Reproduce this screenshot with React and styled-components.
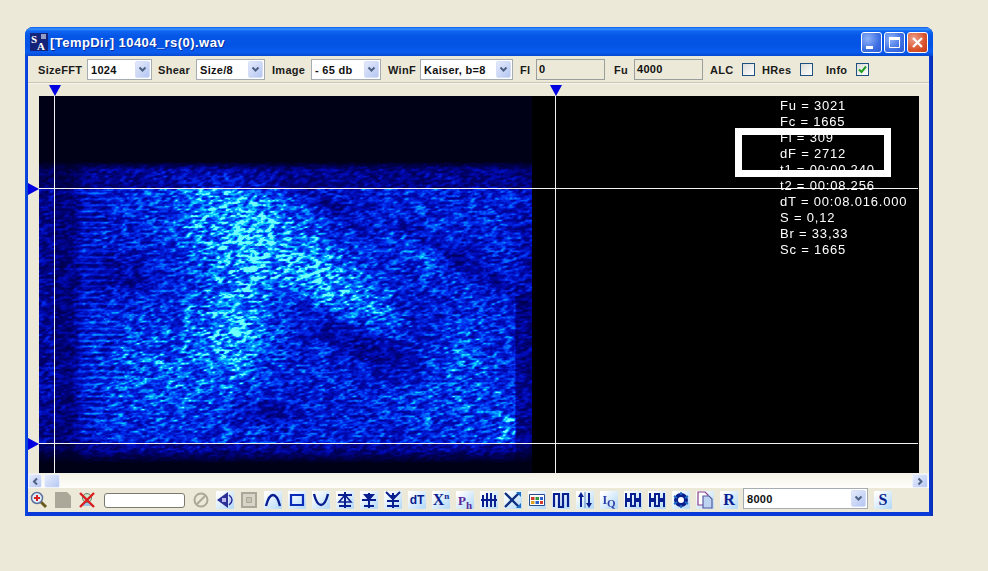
import React, { useEffect, useRef } from "react";
import styled, { createGlobalStyle } from "styled-components";

const Global = createGlobalStyle`
  html, body { margin: 0; padding: 0; background: #ECE9D8; }
  body { width: 988px; height: 571px; overflow: hidden; font-family: "Liberation Sans", Arial, sans-serif; }
`;

const Page = styled.div`
  width: 988px;
  height: 571px;
  padding: 27px 0 0 25px;
  box-sizing: border-box;
`;

const Window = styled.div`
  width: 908px;
  height: 489px;
  display: flex;
  flex-direction: column;
  border-radius: 8px 8px 0 0;
  box-sizing: border-box;
  padding: 0 4px 4px 3px;
  background: linear-gradient(90deg, #0a4ee0 0, #0a3ad8 3px, #0a3ad8 calc(100% - 4px), #0a2cb0 100%);
`;

const TitleBar = styled.div`
  height: 29px;
  flex: none;
  margin: 0 -4px 0 -3px;
  padding: 0 5px 0 5px;
  display: flex;
  align-items: center;
  gap: 2px;
  border-radius: 8px 8px 0 0;
  background: linear-gradient(180deg, #0a5ae6 0, #3a93ff 2px, #0f66f0 4px, #0556e6 9px, #0353e4 18px, #0a5cf0 25px, #0649d0 29px);
`;

const AppGlyph = styled.span`
  width: 18px;
  height: 18px;
  flex: none;
  display: block;
`;

const Title = styled.span`
  color: #fff;
  font: bold 13px "Liberation Sans", Arial, sans-serif;
  letter-spacing: 0.45px;
  flex: 1;
  margin-top: 1px;
  text-shadow: 1px 1px 0 #0a2fa0;
`;

const CaptionButtons = styled.div`
  display: flex;
  gap: 2px;
  margin-top: 1px;
`;

const CaptionButton = styled.div`
  width: 21px;
  height: 21px;
  box-sizing: border-box;
  border: 1px solid #fff;
  border-radius: 3px;
  background: ${(p) =>
    p.$close
      ? "radial-gradient(circle at 30% 30%, #eda08a, #d9532c 60%, #c23a17)"
      : "radial-gradient(circle at 30% 30%, #8fb2f6, #3e70e4 60%, #2a5ad4)"};
  display: flex;
  align-items: center;
  justify-content: center;
`;

const Client = styled.div`
  flex: 1;
  min-height: 0;
  background: #ECE9D8;
  display: flex;
  flex-direction: column;
`;

const Toolbar = styled.div`
  height: 27px;
  flex: none;
  display: flex;
  align-items: center;
  box-sizing: border-box;
  padding-top: 1px;
  border-bottom: 1px solid #c9c6b6;
  box-shadow: 0 1px 0 #f8f6ec;
`;

const Label = styled.span`
  font: bold 11px "Liberation Sans", Arial, sans-serif;
  color: #1a1a1a;
  letter-spacing: 0.3px;
  width: ${(p) => p.$w}px;
  margin-left: ${(p) => p.$ml || 0}px;
  flex: none;
  white-space: nowrap;
`;

const Combo = styled.div`
  flex: none;
  width: ${(p) => p.$w}px;
  height: 21px;
  margin-left: ${(p) => p.$ml || 0}px;
  box-sizing: border-box;
  border: 1px solid #a5acb2;
  background: #fff;
  display: flex;
  align-items: center;
  justify-content: space-between;
  padding: 0 1px 0 3px;
  font: bold 11px "Liberation Sans", Arial, sans-serif;
  letter-spacing: 0.3px;
  color: #111;
`;

const ComboArrow = styled.span`
  width: 15px;
  height: 17px;
  flex: none;
  border-radius: 2px;
  background: linear-gradient(135deg, #e4eafb, #b5c6f2);
  border: 1px solid #d6dff7;
  box-sizing: border-box;
  display: flex;
  align-items: center;
  justify-content: center;
`;

const ReadOnly = styled.div`
  flex: none;
  width: 69px;
  height: 21px;
  box-sizing: border-box;
  border: 1px solid #9a9f9e;
  background: #ECE9D8;
  padding: 0 0 2px 2px;
  display: flex;
  align-items: center;
  font: bold 11px "Liberation Sans", Arial, sans-serif;
  letter-spacing: 0.3px;
  color: #111;
`;

const Check = styled.span`
  flex: none;
  width: 13px;
  height: 13px;
  box-sizing: border-box;
  border: 1px solid #1c5180;
  background: linear-gradient(135deg, #dcdcd7, #ffffff);
  display: flex;
  align-items: center;
  justify-content: center;
`;

const Ruler = styled.div`
  height: 12px;
  flex: none;
  margin-top: 1px;
`;

const Scope = styled.div`
  position: relative;
  flex: none;
  height: 377px;
  margin: 0 11px;
  background: #000;
`;

const Spectro = styled.canvas`
  display: block;
  width: 880px;
  height: 377px;
`;

const Marker = styled.svg`
  position: absolute;
  overflow: visible;
  left: ${(p) => p.$x}px;
  top: ${(p) => p.$y}px;
`;

const VLine = styled.div`
  position: absolute;
  top: 0;
  bottom: 0;
  left: ${(p) => p.$x}px;
  width: 1px;
  background: #f2f2f2;
`;

const HLine = styled.div`
  position: absolute;
  left: 0;
  right: 0;
  top: ${(p) => p.$y}px;
  height: 1px;
  background: #f2f2f2;
`;

const Selection = styled.div`
  position: absolute;
  left: 696px;
  top: 32px;
  width: 156px;
  height: 49px;
  box-sizing: border-box;
  border: 7px solid #fff;
`;

const Info = styled.div`
  position: absolute;
  left: 741px;
  top: 2px;
  color: #fff;
  font: 13px/16px "Liberation Sans", Arial, sans-serif;
  letter-spacing: 0.8px;
  white-space: nowrap;
`;

const Scroll = styled.div`
  height: 15px;
  flex: none;
  display: flex;
  align-items: stretch;
  background: linear-gradient(180deg, #f3f1e6, #fefefb);
  padding: 1px 1px 0 0;
  box-sizing: border-box;
`;

const ScrollButton = styled.div`
  width: ${(p) => p.$w}px;
  flex: none;
  margin-left: ${(p) => p.$ml || 0}px;
  box-sizing: border-box;
  border: 1px solid #eef2fd;
  border-radius: 2px;
  background: linear-gradient(135deg, #e6ecfc, #b7c8f3);
  display: flex;
  align-items: center;
  justify-content: center;
`;

const ScrollSpace = styled.div`
  flex: 1;
`;

const BottomBar = styled.div`
  flex: 1;
  min-height: 0;
  display: flex;
  align-items: center;
`;

const Tool = styled.div`
  flex: none;
  width: 24px;
  height: 20px;
  margin-left: ${(p) => p.$ml || 0}px;
  position: relative;
  display: flex;
  align-items: center;
  justify-content: center;
  &::before {
    content: "";
    position: absolute;
    left: 3px;
    right: 3px;
    top: 1px;
    bottom: 1px;
    display: ${(p) => (p.$plain ? "none" : "block")};
    background: linear-gradient(135deg, #ffffff 10%, #b9dcf8 90%);
  }
  & > * { position: relative; }
`;

const ToolText = styled.span`
  color: ${(p) => p.$color || "#0a1f8f"};
  font: bold ${(p) => p.$size || 15}px "Liberation Serif", "Times New Roman", serif;
  line-height: 1;
  white-space: nowrap;
`;

const ToolSans = styled(ToolText)`
  font-family: "Liberation Sans", Arial, sans-serif;
`;

const Sup = styled.sup`
  font-size: 9px;
  line-height: 0;
`;

const Sub = styled.sub`
  font-size: 11px;
  line-height: 0;
`;

const TextBox = styled.div`
  flex: none;
  width: 81px;
  height: 15px;
  margin: 0 4px 0 5px;
  box-sizing: border-box;
  border: 1px solid #7a7a70;
  border-radius: 3px;
  background: #fff;
`;

const RateCombo = styled(Combo)`
  width: 125px;
  margin-left: 2px;
  margin-top: -3px;
`;

const Chevron = () => (
  <svg width="9" height="7" viewBox="0 0 9 7">
    <path d="M1.5 1.5 4.5 4.5 7.5 1.5" fill="none" stroke="#4d6185" strokeWidth="2" />
  </svg>
);

const SideChevron = ({ right }) => (
  <svg width="7" height="9" viewBox="0 0 7 9">
    <path d={right ? "M1.5 1.5 4.5 4.5 1.5 7.5" : "M5 1.5 2 4.5 5 7.5"} fill="none" stroke="#4d6185" strokeWidth="2" />
  </svg>
);

const Ico = ({ children, w = 18, h = 18 }) => (
  <svg width={w} height={h} viewBox={`0 0 ${w} ${h}`}>
    {children}
  </svg>
);

const INK = "#0a1f8f";

const greekKey = (
  <Ico>
    <path d="M2 2v6h5V3h4v5h5V2M2 16v-6h5v5h4v-5h5v6" stroke={INK} strokeWidth="2" fill="none" />
  </Ico>
);

const icons = {
  zoom: (
    <Ico>
      <path d="M10.5 10.5 16 16" stroke="#6b5a20" strokeWidth="3" />
      <circle cx="7" cy="7" r="5.5" fill="#dff0ff" stroke="#5d6f9a" strokeWidth="1.5" />
      <path d="M4 7h6M7 4v6" stroke="#d81e1e" strokeWidth="2" />
    </Ico>
  ),
  page: (
    <Ico>
      <path d="M1 1h12l4 4v12H1z" fill="#aca899" />
    </Ico>
  ),
  cut: (
    <Ico>
      <path d="M3 15h12l-6-6z" fill="#9ec6e8" />
      <circle cx="9" cy="7" r="4.5" fill="#cfe6c8" stroke="#66806a" />
      <path d="M2 2 16 16M16 2 2 16" stroke="#d81e1e" strokeWidth="2.4" />
    </Ico>
  ),
  ban: (
    <Ico>
      <circle cx="9" cy="9" r="6.5" fill="none" stroke="#aca899" strokeWidth="2" />
      <path d="M4.5 13.5 13.5 4.5" stroke="#aca899" strokeWidth="2" />
    </Ico>
  ),
  speaker: (
    <Ico>
      <path d="M1 9 12 1v16z" fill="#2b2f96" />
      <path d="M6 7h4v4H6z" fill="#b9b6e8" />
      <path d="M13 4c4 3 4 7 0 10" fill="#c9d4f5" stroke="#2b2f96" strokeWidth="1.5" />
    </Ico>
  ),
  square: (
    <Ico>
      <path d="M2 2h14v14H2z" fill="#d9d5c6" stroke="#aca899" strokeWidth="2" />
      <path d="M6.5 6.5h5v5h-5z" fill="#c7c3b2" stroke="#aca899" />
    </Ico>
  ),
  cap: <Ico><path d="M2 15C4 7 6.5 4 9 4s5 3 7 11" fill="none" stroke={INK} strokeWidth="2.4" /></Ico>,
  rect: <Ico><path d="M3 4h12v10H3z" fill="none" stroke="#0a2cb8" strokeWidth="2.2" /></Ico>,
  cup: <Ico><path d="M2 3c2 8 4.5 11 7 11s5-3 7-11" fill="none" stroke={INK} strokeWidth="2.4" /></Ico>,
  up: (
    <Ico>
      <path d="M9 1v16M2 4h14M3 15h12" stroke={INK} strokeWidth="2" fill="none" />
      <path d="M9 4 3 11h12z" fill="none" stroke={INK} strokeWidth="1.6" />
    </Ico>
  ),
  down: (
    <Ico>
      <path d="M9 2v15M2 9h14M4 15h10" stroke={INK} strokeWidth="2" fill="none" />
      <path d="M3 3h12L9 10z" fill={INK} />
    </Ico>
  ),
  both: (
    <Ico>
      <path d="M9 2v15M3 10h12M3 15h12" stroke={INK} strokeWidth="2" fill="none" />
      <path d="M2 1 9 8l7-7" fill="none" stroke={INK} strokeWidth="2" />
      <path d="M5 4h8L9 9z" fill={INK} />
    </Ico>
  ),
  comb: <Ico><path d="M3 4v12M7 2v14M11 2v14M15 4v12M1 9h16" stroke={INK} strokeWidth="2" fill="none" /></Ico>,
  cross: (
    <Ico>
      <path d="M1 2 15 16M1 16 15 2" stroke="#10307f" strokeWidth="2.4" />
      <path d="M12 1h5v5zM12 17h5v-5z" fill="#1d6fc4" />
    </Ico>
  ),
  table: (
    <Ico>
      <path d="M1.5 3.5h15v11h-15z" fill="#fff" stroke="#2a4a8c" />
      <path d="M3 6h3.500v3H3z" fill="#d43b2a" />
      <path d="M7.500 6H11v3H7.500z" fill="#2d9a3e" />
      <path d="M12 6h3v3h-3z" fill="#2a60c8" />
      <path d="M3 10h3.500v3H3z" fill="#e0a020" />
      <path d="M7.500 10H11v3H7.500z" fill="#2a60c8" />
      <path d="M12 10h3v3h-3z" fill="#d43b2a" />
    </Ico>
  ),
  pulse: <Ico><path d="M2 16V3h5v13h4V3h5v13" stroke={INK} strokeWidth="2.2" fill="none" /></Ico>,
  updown: (
    <Ico>
      <path d="M5 16V5M13 2v11" stroke={INK} strokeWidth="2" />
      <path d="M5 1 2 6h6z" fill={INK} />
      <path d="M13 17l-3-5h6z" fill={INK} />
      <path d="M9 1v16" stroke="#5c88c0" />
    </Ico>
  ),
  gear: (
    <Ico>
      <circle cx="9" cy="9" r="5" fill="#fff" stroke={INK} strokeWidth="4" />
      <path d="M9 1v3M9 14v3M2 5l3 2M13 11l3 2M16 5l-3 2M5 11l-3 2" stroke="#1d6fc4" strokeWidth="1.6" />
    </Ico>
  ),
  copy: (
    <Ico>
      <path d="M2 1h7l3 3v10H2z" fill="#fff" stroke="#8a3f8f" strokeWidth="1.2" />
      <path d="M7 5h6l3 3v9H7z" fill="#bcd3f2" stroke="#5a5aa0" strokeWidth="1.2" />
    </Ico>
  ),
};

function hash(x, y) {
  let h = (x * 374761393 + y * 668265263) | 0;
  h = Math.imul(h ^ (h >>> 13), 1274126177);
  return ((h ^ (h >>> 16)) >>> 0) / 4294967295;
}

function vnoise(x, y) {
  const x0 = Math.floor(x), y0 = Math.floor(y);
  const fx = x - x0, fy = y - y0;
  const sx = fx * fx * (3 - 2 * fx), sy = fy * fy * (3 - 2 * fy);
  const a = hash(x0, y0), b = hash(x0 + 1, y0), c = hash(x0, y0 + 1), d = hash(x0 + 1, y0 + 1);
  return (a + (b - a) * sx) * (1 - sy) + (c + (d - c) * sx) * sy;
}

function blob(x, y, cx, cy, rx, ry, deg) {
  const a = (deg * Math.PI) / 180;
  const dx = x - cx, dy = y - cy;
  const u = (dx * Math.cos(a) + dy * Math.sin(a)) / rx;
  const v = (-dx * Math.sin(a) + dy * Math.cos(a)) / ry;
  return Math.exp(-(u * u + v * v));
}

function ramp(v, a, b) {
  return Math.min(1, Math.max(0, (v - a) / (b - a)));
}

function envelope(x, y) {
  let e = 0.42;
  e += 0.36 * blob(x, y, 235, 225, 70, 48, 40);
  e += 0.3 * blob(x, y, 330, 280, 75, 28, 35);
  e += 0.3 * blob(x, y, 235, 320, 32, 55, 10);
  e += 0.16 * blob(x, y, 170, 370, 80, 60, 0);
  e += 0.14 * blob(x, y, 460, 380, 50, 60, 0);
  e += 0.14 * blob(x, y, 420, 250, 40, 18, 35);
  e += 0.3 * blob(x, y, 507, 430, 10, 14, 0);
  e -= 0.18 * blob(x, y, 125, 275, 28, 24, 0);
  e -= 0.22 * blob(x, y, 365, 345, 70, 18, 25);
  e -= 0.16 * blob(x, y, 330, 205, 55, 9, 35);
  e -= 0.2 * blob(x, y, 450, 255, 90, 10, 30);
  e -= 0.18 * blob(x, y, 265, 410, 35, 14, 0);
  e -= 0.14 * blob(x, y, 420, 320, 22, 30, 0);
  e = Math.max(e, 0.27);
  if (x < 54) e *= 0.62;
  else e *= 0.48 + 0.52 * ramp(x, 72, 84);
  if (x > 500) {
    const floor = y > 295 ? 0.52 : 0.72;
    e *= 1 - (1 - floor) * ramp(x, y > 295 ? 514 : 505, y > 295 ? 516 : 532);
  }
  if (y < 188) e *= 0.56;
  if (y > 443) e *= 0.6;
  if (y < 170) e *= Math.max(0, (y - 161) / 9);
  if (y > 448) e *= Math.max(0, (463 - y) / 15);
  return e;
}

const STOPS = [
  [0, [0, 0, 22]],
  [0.14, [0, 0, 90]],
  [0.32, [0, 8, 175]],
  [0.52, [0, 45, 240]],
  [0.72, [0, 125, 255]],
  [0.9, [10, 210, 255]],
  [1, [110, 255, 250]],
];

function colour(v) {
  const t = Math.min(1, Math.max(0, v));
  for (let i = 1; i < STOPS.length; i++) {
    if (t <= STOPS[i][0]) {
      const [p0, c0] = STOPS[i - 1];
      const [p1, c1] = STOPS[i];
      const k = (t - p0) / (p1 - p0);
      return c0.map((c, j) => c + (c1[j] - c) * k);
    }
  }
  return STOPS[STOPS.length - 1][1];
}

function Spectrogram() {
  const ref = useRef(null);
  useEffect(() => {
    const ctx = ref.current.getContext("2d");
    const img = ctx.createImageData(880, 377);
    for (let py = 0; py < 377; py++) {
      for (let px = 0; px < 880; px++) {
        const i = (py * 880 + px) * 4;
        img.data[i + 3] = 255;
        if (px >= 493) continue;
        const x = px + 39, y = py + 96;
        const n1 = vnoise(x / 4.5 + y * 0.15, y / 2.2);
        const n2 = vnoise(x / 2.2, y / 1.4 + 50);
        let n = 0.7 * n1 + 0.3 * n2;
        n = 0.48 + Math.pow(n, 1.6) * 1.65;
        const edge = 92 + vnoise(y / 9, 7) * 34;
        if (x >= 76 && x < edge && y > 190 && y < 443) {
          const line = 0.5 + 0.5 * Math.sin(y * 1.05 + vnoise(3, y / 30) * 4);
          n = 0.7 * n + 0.55 * line * line;
        }
        const c = colour(envelope(x, y) * n);
        img.data[i] = c[0];
        img.data[i + 1] = c[1];
        img.data[i + 2] = c[2];
      }
    }
    ctx.putImageData(img, 0, 0);
  }, []);
  return <Spectro ref={ref} width={880} height={377} />;
}

const DownMarker = ({ x }) => (
  <Marker $x={x} $y={-11} width="12" height="11" viewBox="0 0 12 11">
    <path d="M0 0h12L6 11z" fill="#0000e0" />
  </Marker>
);

const RightMarker = ({ y }) => (
  <Marker $x={-11} $y={y} width="11" height="12" viewBox="0 0 11 12">
    <path d="M0 0v12L11 6z" fill="#0000e0" />
  </Marker>
);

const INFO = [
  "Fu = 3021",
  "Fc = 1665",
  "Fl = 309",
  "dF = 2712",
  "t1 = 00:00.240",
  "t2 = 00:08.256",
  "dT = 00:08.016.000",
  "S = 0,12",
  "Br = 33,33",
  "Sc = 1665",
];

export default function App() {
  return (
    <>
      <Global />
      <Page>
        <Window>
          <TitleBar>
            <AppGlyph>
              <svg width="18" height="18" viewBox="0 0 18 18">
                <path d="M0 0h18v18H0z" fill="#14237a" />
                <text x="1" y="10" fill="#fff" fontSize="11" fontFamily="Liberation Serif" fontWeight="700">S</text>
                <text x="7" y="17" fill="#fff" fontSize="11" fontFamily="Liberation Serif" fontWeight="700">A</text>
                <path d="M11 1h5v5h-5z" fill="#c8d0e8" opacity=".7" />
              </svg>
            </AppGlyph>
            <Title>[TempDir] 10404_rs(0).wav</Title>
            <CaptionButtons>
              <CaptionButton>
                <svg width="19" height="19" viewBox="0 0 19 19"><path d="M4 13h7v3H4z" fill="#fff" /></svg>
              </CaptionButton>
              <CaptionButton>
                <svg width="19" height="19" viewBox="0 0 19 19"><path d="M4.5 5.500h10v9h-10z" fill="none" stroke="#fff" /><path d="M4 4h11v3H4z" fill="#fff" /></svg>
              </CaptionButton>
              <CaptionButton $close>
                <svg width="19" height="19" viewBox="0 0 19 19"><path d="M5 5l9 9M14 5l-9 9" stroke="#fff" strokeWidth="2.2" /></svg>
              </CaptionButton>
            </CaptionButtons>
          </TitleBar>
          <Client>
            <Toolbar>
              <Label $ml={10} $w={49}>SizeFFT</Label>
              <Combo $w={65}>1024<ComboArrow><Chevron /></ComboArrow></Combo>
              <Label $ml={6} $w={38}>Shear</Label>
              <Combo $w={69}>Size/8<ComboArrow><Chevron /></ComboArrow></Combo>
              <Label $ml={7} $w={39}>Image</Label>
              <Combo $w={70}>- 65 db<ComboArrow><Chevron /></ComboArrow></Combo>
              <Label $ml={7} $w={32}>WinF</Label>
              <Combo $w={93}>Kaiser, b=8<ComboArrow><Chevron /></ComboArrow></Combo>
              <Label $ml={7} $w={16}>Fl</Label>
              <ReadOnly>0</ReadOnly>
              <Label $ml={9} $w={20}>Fu</Label>
              <ReadOnly>4000</ReadOnly>
              <Label $ml={7} $w={32}>ALC</Label>
              <Check />
              <Label $ml={7} $w={38}>HRes</Label>
              <Check />
              <Label $ml={13} $w={30}>Info</Label>
              <Check>
                <svg width="11" height="11" viewBox="0 0 11 11"><path d="M2 5.5 4.5 8 9 2.5" fill="none" stroke="#21a121" strokeWidth="2" /></svg>
              </Check>
            </Toolbar>
            <Ruler />
            <Scope>
              <Spectrogram />
              <DownMarker x={10} />
              <DownMarker x={511} />
              <RightMarker y={87} />
              <RightMarker y={342} />
              <VLine $x={15} />
              <VLine $x={516} />
              <HLine $y={92} />
              <HLine $y={347} />
              <Selection />
              <Info>
                {INFO.map((line) => (
                  <div key={line}>{line}</div>
                ))}
              </Info>
            </Scope>
            <Scroll>
              <ScrollButton $w={14}><SideChevron /></ScrollButton>
              <ScrollButton $w={16} $ml={2} />
              <ScrollSpace />
              <ScrollButton $w={16}><SideChevron right /></ScrollButton>
            </Scroll>
            <BottomBar>
              <Tool $ml={-1} $plain>{icons.zoom}</Tool>
              <Tool $plain>{icons.page}</Tool>
              <Tool $plain>{icons.cut}</Tool>
              <TextBox />
              <Tool $plain>{icons.ban}</Tool>
              <Tool>{icons.speaker}</Tool>
              <Tool $plain>{icons.square}</Tool>
              <Tool>{icons.cap}</Tool>
              <Tool>{icons.rect}</Tool>
              <Tool>{icons.cup}</Tool>
              <Tool>{icons.up}</Tool>
              <Tool>{icons.down}</Tool>
              <Tool>{icons.both}</Tool>
              <Tool><ToolSans $size={12}>dT</ToolSans></Tool>
              <Tool><ToolText $size={16}>X<Sup>n</Sup></ToolText></Tool>
              <Tool><ToolText $size={13} $color="#5a2a9a">P<Sub>h</Sub></ToolText></Tool>
              <Tool>{icons.comb}</Tool>
              <Tool>{icons.cross}</Tool>
              <Tool>{icons.table}</Tool>
              <Tool>{icons.pulse}</Tool>
              <Tool>{icons.updown}</Tool>
              <Tool><ToolText $size={12} $color="#2a3fa8">I<Sub>Q</Sub></ToolText></Tool>
              <Tool>{greekKey}</Tool>
              <Tool>{greekKey}</Tool>
              <Tool>{icons.gear}</Tool>
              <Tool>{icons.copy}</Tool>
              <Tool><ToolText $size={16}>R</ToolText></Tool>
              <RateCombo>8000<ComboArrow><Chevron /></ComboArrow></RateCombo>
              <Tool $ml={3}><ToolText $size={16}>S</ToolText></Tool>
            </BottomBar>
          </Client>
        </Window>
      </Page>
    </>
  );
}
